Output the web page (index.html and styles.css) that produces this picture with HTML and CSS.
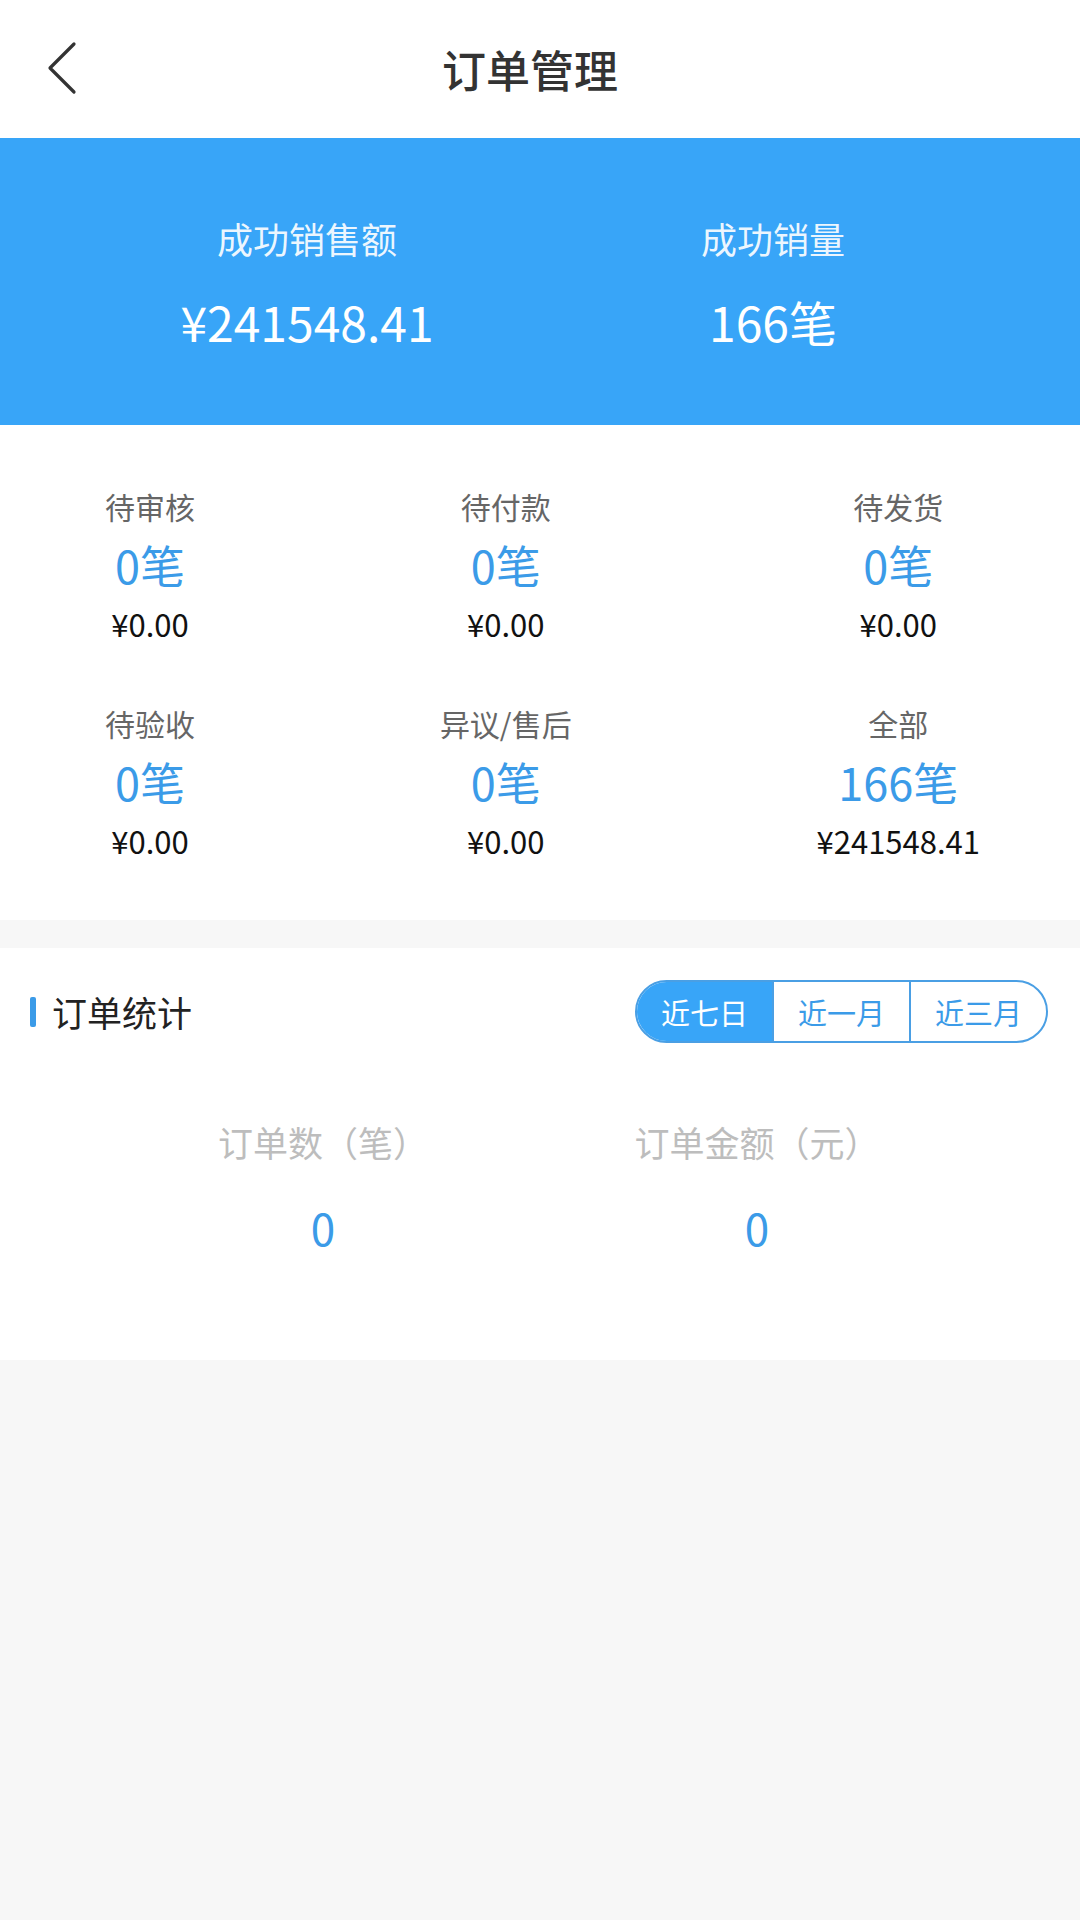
FILE: index.html
```html
<!DOCTYPE html>
<html lang="zh-CN">
<head>
<meta charset="utf-8">
<title>订单管理</title>
<link rel="stylesheet" href="styles.css">
</head>
<body>
<div class="page">
  <header class="topbar">
    <div class="back">
      <svg width="40" height="60" viewBox="0 0 40 60"><polyline points="27,4 3,28 27,52" fill="none" stroke="#333" stroke-width="3.2" stroke-linecap="round" stroke-linejoin="round"/></svg>
    </div>
    <h1 class="title">订单管理</h1>
    <div></div>
  </header>

  <section class="summary">
    <div class="sum-col">
      <div class="sum-label">成功销售额</div>
      <div class="sum-value">¥241548.41</div>
    </div>
    <div class="sum-col">
      <div class="sum-label">成功销量</div>
      <div class="sum-value">166笔</div>
    </div>
  </section>

  <section class="status-grid">
    <div class="st"><div class="st-label">待审核</div><div class="st-count">0笔</div><div class="st-money">¥0.00</div></div>
    <div class="st"><div class="st-label">待付款</div><div class="st-count">0笔</div><div class="st-money">¥0.00</div></div>
    <div class="st"><div class="st-label">待发货</div><div class="st-count">0笔</div><div class="st-money">¥0.00</div></div>
    <div class="st"><div class="st-label">待验收</div><div class="st-count">0笔</div><div class="st-money">¥0.00</div></div>
    <div class="st"><div class="st-label">异议/售后</div><div class="st-count">0笔</div><div class="st-money">¥0.00</div></div>
    <div class="st"><div class="st-label">全部</div><div class="st-count">166笔</div><div class="st-money">¥241548.41</div></div>
  </section>

  <section class="stats">
    <div class="stats-head">
      <div class="stats-title"><span class="bar"></span>订单统计</div>
      <div class="seg">
        <div class="seg-item active">近七日</div>
        <div class="seg-item">近一月</div>
        <div class="seg-item">近三月</div>
      </div>
    </div>
    <div class="stats-body">
      <div class="sb-col">
        <div class="sb-label">订单数（笔）</div>
        <div class="sb-value">0</div>
      </div>
      <div class="sb-col">
        <div class="sb-label">订单金额（元）</div>
        <div class="sb-value">0</div>
      </div>
    </div>
  </section>
</div>
</body>
</html>
```

FILE: styles.css
```css
* { box-sizing: border-box; }
html, body {
  margin: 0;
  padding: 0;
  background: #f7f7f7;
  font-family: "Noto Sans CJK SC", "Noto Sans", sans-serif;
}
.page {
  width: 1080px;
  min-height: 1920px;
  background: #f7f7f7;
}

/* header */
.topbar {
  height: 138px;
  background: #fff;
  display: grid;
  grid-template-columns: 1fr auto 1fr;
  align-items: center;
  padding-right: 20px;
}
.back {
  padding-left: 47px;
  display: flex;
  align-items: center;
  padding-top: 2px;
}
.back svg { display: block; }
.title {
  margin: 0;
  font-size: 44px;
  font-weight: 500;
  color: #333;
  line-height: 60px;
}

/* blue summary */
.summary {
  height: 287px;
  background: #38a5f8;
  display: flex;
  padding: 76px 74px 0;
}
.sum-col {
  flex: 1;
  display: flex;
  flex-direction: column;
  align-items: center;
}
.sum-label {
  font-size: 36px;
  line-height: 48px;
  color: rgba(255, 255, 255, 0.92);
}
.sum-value {
  margin-top: 29px;
  font-size: 48px;
  line-height: 60px;
  color: #fff;
}

/* status grid */
.status-grid {
  background: #fff;
  height: 495px;
  display: grid;
  grid-template-columns: repeat(3, auto);
  justify-content: space-between;
  row-gap: 59px;
  padding: 61px 100px 0 105px;
  align-content: start;
}
.st {
  display: flex;
  flex-direction: column;
  align-items: center;
}
.st-label {
  font-size: 30px;
  line-height: 40px;
  color: #666;
}
.st-count {
  font-size: 45px;
  line-height: 78px;
  color: #3b9be8;
}
.st-money {
  font-size: 31px;
  line-height: 40px;
  color: #111;
}

/* stats */
.stats {
  margin-top: 28px;
  background: #fff;
  height: 412px;
  padding-top: 32px;
}
.stats-head {
  display: flex;
  align-items: center;
  justify-content: space-between;
  padding: 0 32px 0 30px;
}
.stats-title {
  display: flex;
  align-items: center;
  font-size: 35px;
  line-height: 48px;
  color: #222;
}
.bar {
  width: 6px;
  height: 30px;
  background: #3b9be8;
  border-radius: 2px;
  margin-right: 16px;
}
.seg {
  display: flex;
  width: 413px;
  height: 63px;
  border: 2px solid #4a9fe4;
  border-radius: 32px;
  overflow: hidden;
}
.seg-item {
  flex: 1;
  display: flex;
  align-items: center;
  justify-content: center;
  font-size: 29px;
  color: #3b9be8;
  border-left: 2px solid #4a9fe4;
}
.seg-item:first-child { border-left: none; }
.seg-item.active {
  background: #38a5f8;
  color: #fff;
}
.stats-body {
  display: flex;
  padding: 0 106px;
  margin-top: 75px;
}
.sb-col {
  flex: 1;
  display: flex;
  flex-direction: column;
  align-items: center;
}
.sb-label {
  font-size: 35px;
  line-height: 48px;
  color: #bdbdbd;
}
.sb-value {
  margin-top: 31px;
  font-size: 44px;
  line-height: 60px;
  color: #3b9be8;
}
```
